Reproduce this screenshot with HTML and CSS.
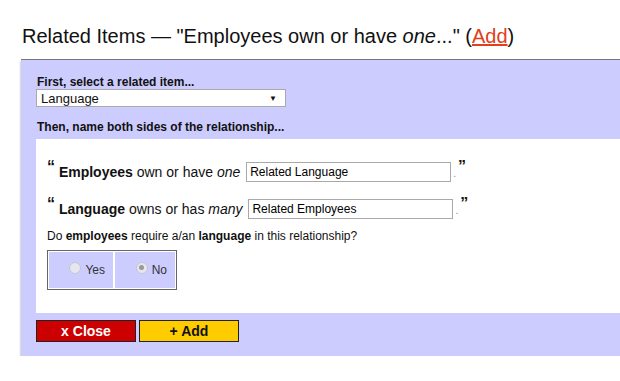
FILE: index.html
```html
<!DOCTYPE html>
<html lang="en">
<head>
  <meta charset="UTF-8">
  <title>Related Items</title>
  <link rel="stylesheet" href="styles.css">
</head>
<body>
  <h2 class="title">Related Items — "Employees own or have <i>one</i>..." (<a href="#">Add</a>)</h2>

  <div class="panel">
    <label class="step">First, select a related item...</label>
    <div class="select">
      <span>Language</span>
      <span class="arrow">&#9660;</span>
    </div>

    <label class="step step-two">Then, name both sides of the relationship...</label>

    <div class="sheet">
      <div class="phrase">
        <span class="q">&ldquo;</span> <b>Employees</b> own or have <i>one</i>
        <input class="name" type="text" value="Related Language"><span class="dot">.</span><span class="q">&rdquo;</span>
      </div>
      <div class="phrase">
        <span class="q">&ldquo;</span> <b>Language</b> owns or has <i>many</i>
        <input class="name" type="text" value="Related Employees"><span class="dot">.</span><span class="q">&rdquo;</span>
      </div>
      <p class="ask">Do <b>employees</b> require a/an <b>language</b> in this relationship?</p>
      <div class="choice">
        <label class="opt"><span class="radio"></span>Yes</label>
        <label class="opt"><span class="radio on"></span>No</label>
      </div>
    </div>

    <div class="actions">
      <button class="btn close">x Close</button>
      <button class="btn add">+ Add</button>
    </div>
  </div>
</body>
</html>
```

FILE: styles.css
```css
body {
  margin: 0;
  font-family: Arial, "Liberation Sans", sans-serif;
  color: #111;
  background: #fff;
}
.title {
  margin: 24px 0 11px 22px;
  font-size: 20px;
  font-weight: normal;
  line-height: 24px;
  color: #111;
}
.title a {
  color: #e0401a;
}
.panel {
  margin-left: 21px;
  background: #ccccff;
  border-top: 1px solid #777;
  box-shadow: 0 2px 2px rgba(0, 0, 0, 0.45);
  padding: 15px 0 14px 15px;
}
.step {
  display: block;
  font-size: 12px;
  font-weight: bold;
  line-height: 14px;
  margin-left: 1px;
}
.step-two {
  margin-top: 13px;
}
.select {
  display: flex;
  justify-content: space-between;
  align-items: center;
  width: 236px;
  height: 16px;
  padding: 0 8px 0 4px;
  background: #fff;
  border: 1px solid #a9a9a9;
  font-size: 13px;
}
.arrow {
  font-size: 8px;
}
.sheet {
  background: #fff;
  margin-top: 5px;
  padding: 18px 11px 23px;
}
.phrase {
  height: 20px;
  font-size: 14px;
  line-height: 20px;
  margin-bottom: 17px;
}
.phrase .q {
  font-size: 16px;
  font-weight: bold;
  vertical-align: 5px;
}
.name {
  font-family: inherit;
  font-size: 12px;
  width: 197px;
  height: 14px;
  padding: 2px 3px;
  border: 1px solid #a9a9a9;
  margin: 0 0 0 2px;
  vertical-align: 1px;
}
.dot {
  font-size: 10px;
  color: #888;
  margin: 0 2px;
}
.ask {
  font-size: 12px;
  line-height: 14px;
  margin: -2px 0 7px;
}
.choice {
  display: inline-flex;
  gap: 2px;
  padding: 1px;
  border: 1px solid #666;
  background: #fff;
}
.opt {
  display: flex;
  align-items: center;
  justify-content: flex-end;
  background: #ccccff;
  height: 36px;
  font-size: 12px;
  color: #333;
  padding-right: 8px;
}
.opt:first-child {
  width: 56px;
}
.opt:last-child {
  width: 52px;
}
.radio {
  width: 12px;
  height: 12px;
  border-radius: 50%;
  background: #e6e6ee;
  border: 1px solid #c4c4d4;
  margin-right: 4px;
  margin-top: -5px;
  box-sizing: border-box;
  position: relative;
}
.radio.on::after {
  content: "";
  position: absolute;
  left: 2.5px;
  top: 2.5px;
  width: 5px;
  height: 5px;
  border-radius: 50%;
  background: #999;
}
.actions {
  display: flex;
  gap: 3px;
  margin-top: 7px;
}
.btn {
  width: 100px;
  height: 22px;
  border: 1px solid #222;
  font-family: inherit;
  font-size: 14px;
  font-weight: bold;
  padding: 0;
}
.close {
  background: #cc0000;
  color: #fff;
}
.add {
  background: #ffcc00;
  color: #111;
}
```
